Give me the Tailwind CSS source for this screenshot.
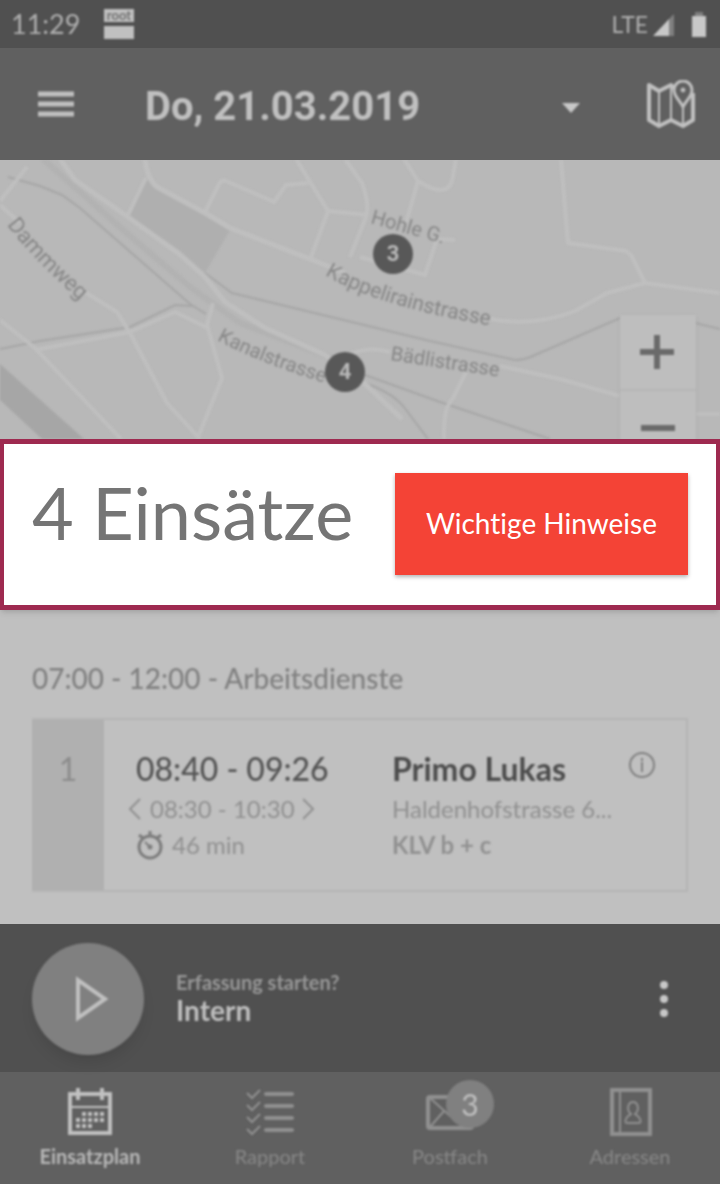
<!DOCTYPE html>
<html lang="de">
<head>
    <meta charset="UTF-8">
    <meta name="viewport" content="width=device-width, initial-scale=1.0">
    <title>Einsatzplan</title>
    <script src="https://cdn.jsdelivr.net/npm/@tailwindcss/browser@4"></script>
</head>
<body class="bg-[#c0c0c0] font-['Lato','Open_Sans',sans-serif]">
    <div class="flex min-h-screen flex-col overflow-hidden">

        <!-- Status Bar -->
        <div class="h-12 bg-[#505050] text-[#b0b0b0]">
            <div class="flex h-12 items-center justify-between pr-2 pl-[11px] blur-[1px]">
                <div class="flex items-center gap-[23px]">
                    <span class="text-[27px] leading-8">11:29</span>
                    <svg class="h-8 w-8" viewBox="0 0 32 32" aria-hidden="true">
                        <path fill="#c0c0c0" d="M1 1h30v13H1zM1 18h30v13H1z"/>
                        <text x="16" y="12" text-anchor="middle" font-family="Lato" font-weight="700" font-size="13" fill="#707070">root</text>
                    </svg>
                </div>
                <div class="flex items-center gap-1">
                    <span class="text-[23px] leading-8">LTE</span>
                    <svg class="h-8 w-6" viewBox="0 0 24 32" aria-hidden="true">
                        <path fill="#808080" d="M17 11l5-5v22h-5z"/>
                        <path fill="#c8c8c8" d="M1 28L17 11v17z"/>
                    </svg>
                    <svg class="ml-2 h-8 w-6" viewBox="0 0 24 32" aria-hidden="true">
                        <path fill="#808080" d="M7 4h8v4h-8z"/>
                        <path fill="#c8c8c8" d="M4 8h14v21H4z"/>
                    </svg>
                </div>
            </div>
        </div>

        <!-- Header -->
        <header class="bg-[#606060]">
            <div class="flex h-28 items-center pr-6 pl-8 text-[#c0c0c0] blur-[1px]">
                <button type="button" aria-label="Menü" class="h-12 w-12">
                    <svg class="h-12 w-12" viewBox="0 0 48 48">
                        <path stroke="#c0c0c0" stroke-width="5" d="M6 14h36M6 24h36M6 34h36"/>
                    </svg>
                </button>
                <button type="button" class="ml-16 flex flex-1 items-center justify-between pt-[6px] pl-px text-left">
                    <span class="font-['Roboto',sans-serif] text-[40px] leading-[48px] font-bold">Do, 21.03.2019</span>
                    <svg class="mr-16 h-5 w-5" viewBox="0 0 20 20" aria-hidden="true">
                        <path fill="#c8c8c8" d="M0 6h18l-9 10z"/>
                    </svg>
                </button>
                <button type="button" aria-label="Karte" class="h-12 w-[50px]">
                    <svg class="h-12 w-[50px]" viewBox="0 0 50 48" fill="none" stroke="#c0c0c0">
                        <path stroke-width="4" stroke-linejoin="round" d="M30 10l-5-5-12 6-10-6v35l10 6 12-6 12 6 10-6V13"/>
                        <path stroke-width="2" d="M13 11v34M25 5v36M37 27v18"/>
                        <path stroke-width="3" fill="#606060" d="M37 27c-3-7-9-10-9-17a9 9 0 0 1 18 0c0 7-6 10-9 17z"/>
                        <circle cx="37" cy="10" r="2" fill="#c0c0c0"/>
                    </svg>
                </button>
            </div>
        </header>

        <!-- Map -->
        <section class="relative h-[279px] overflow-hidden bg-[#b8b8b8]" aria-label="Karte">
            <svg class="h-full w-full blur-[1px]" viewBox="0 160 720 279" preserveAspectRatio="xMidYMid slice">
                <defs>
                    <path id="dammweg" d="M7 225Q35 262 85 305"/>
                    <path id="kappeli" d="M325 275Q380 308 505 328"/>
                    <path id="kanal" d="M217 340Q260 364 345 389"/>
                    <path id="baedli" d="M390 360L515 379"/>
                    <path id="hohle" d="M370 223L455 247"/>
                </defs>
                <!-- areas -->
                <path fill="#afafaf" d="M147 178l10 9 73 43-25 43-25-22-51-35z"/>
                <path fill="#a6a6a6" d="M0 364l84 75H42L0 400z"/>
                <!-- railway -->
                <path fill="none" stroke="#b2b2b2" stroke-width="6" d="M43 159l87 77 60 51 50 36 105 40"/>
                <g fill="none" stroke="#a6a6a6" stroke-width="2">
                    <path d="M8 177l32 9 22 9 18 13 110 96 16 10"/>
                    <path d="M0 349l40-8 90-14 45-22 17 1"/>
                    <path d="M205 273l27 20 128 31 70 17 85 19q10 0 20-5l85-37 55 0 45 11"/>
                    <path d="M362 382q30 10 42 25l24 32M365 375l75 27 110 37"/>
                </g>
                <!-- streets -->
                <g fill="none" stroke="#bfbfbf" stroke-width="4" stroke-linejoin="round">
                    <path d="M0 201l27-34"/>
                    <path d="M0 205l20 18M80 289l37 23 13 21 37 70 33 36"/>
                    <path d="M0 320l35 28 86 91M35 350l95-18 45-20 33 16"/>
                    <path d="M213 303l-6 22 15 53-23 57"/>
                    <path stroke-width="5" d="M60 159l15 21 53 37 50 36 27 24 20 25 40 26 60 27 35 24 42 40"/>
                    <path stroke-width="5" d="M145 159q2 20 12 28l48 26 25 15 80 31 35 14"/>
                    <path d="M146 178l-18 37M205 212l14-28q3-5 7-3l48 21 12-17 22-2"/>
                    <path d="M296 159l32 52-18 49M328 211l40 4M345 159l17 24q8 22 4 34l-16 40"/>
                    <path d="M360 257l65 18 12-36 18 1M404 159l14 22q28 18 34 0l4-22M418 181l-12 42"/>
                    <path d="M490 319q45 8 85-8l32-18 38-10 75 10M561 159l7 84 58 8 5 4 14 28"/>
                    <path d="M350 354q20-8 40-2M500 366l60 13 60 17M466 372l-13 26q-10 10-9 41M695 414h25"/>
                </g>
                <g font-family="Roboto, sans-serif" font-size="21" fill="#868686">
                    <text font-size="22"><textPath href="#dammweg">Dammweg</textPath></text>
                    <text><textPath href="#kappeli">Kappelirainstrasse</textPath></text>
                    <text font-size="20"><textPath href="#kanal">Kanalstrasse</textPath></text>
                    <text font-size="20"><textPath href="#baedli">Bädlistrasse</textPath></text>
                    <text font-size="20"><textPath href="#hohle">Hohle G.</textPath></text>
                </g>
                <g font-family="Roboto, sans-serif" font-size="22" font-weight="700" text-anchor="middle">
                    <circle cx="393" cy="254" r="20" fill="#585858"/>
                    <text x="393" y="261" fill="#b8b8b8">3</text>
                    <circle cx="345" cy="372" r="20" fill="#585858"/>
                    <text x="345" y="379" fill="#b8b8b8">4</text>
                </g>
            </svg>
            <!-- zoom buttons lie over the map -->
            <div class="absolute top-[155px] right-6 w-[76px] divide-y-2 divide-[#b6b6b6] bg-[#bebebe] shadow-sm blur-[1px]">
                <button type="button" aria-label="Vergrössern" class="flex h-[76px] w-full items-center justify-center">
                    <svg class="h-9 w-9" viewBox="0 0 36 36"><path stroke="#6a6a6a" stroke-width="6" d="M17 1v34M0 18h34"/></svg>
                </button>
                <button type="button" aria-label="Verkleinern" class="flex h-[76px] w-full items-center justify-center">
                    <svg class="h-9 w-9" viewBox="0 0 36 36"><path stroke="#6a6a6a" stroke-width="6" d="M1 17h34"/></svg>
                </button>
            </div>
        </section>

        <!-- Highlighted summary -->
        <section class="relative flex items-start justify-between border-x-4 border-y-5 border-[#9e2a50] bg-white px-7 pt-[29px] pb-[30px] shadow-md">
            <h1 class="pt-[3px] text-[72px] leading-[72px] text-[#757575]">4 Einsätze</h1>
            <button type="button" class="bg-[#f44336] px-[31px] pt-[33px] pb-[35px] text-[28px] leading-[34px] text-white shadow-[0_2px_4px_rgba(0,0,0,0.3)] [font-variant-ligatures:none]">Wichtige Hinweise</button>
        </section>

        <!-- Assignment list -->
        <main class="flex-1 bg-[#c0c0c0]">
            <div class="px-8 pt-[52px] pb-8 blur-[1px]">
                <h2 class="text-[28px] leading-8 font-medium text-[#808080]">07:00 - 12:00 - Arbeitsdienste</h2>
                <article class="mt-6 flex border-2 border-l-0 border-[#b4b4b4]">
                    <div class="w-[72px] bg-[#b0b0b0] pt-[29px] text-center text-[32px] leading-10 text-[#8c8c8c]">1</div>
                    <div class="w-[288px] pt-[29px] pb-[29px] pl-6 text-[24px] text-[#909090]">
                        <p class="pl-2 text-[32px] leading-10 font-medium text-[#555555]">08:40 - 09:26</p>
                        <p class="flex items-center gap-2 leading-10">
                            <svg class="h-6 w-[14px]" viewBox="0 0 14 24" fill="none" stroke="#909090" stroke-width="2"><path d="M12 2L2 12l10 10"/></svg>
                            <span>08:30 - 10:30</span>
                            <svg class="h-6 w-[14px]" viewBox="0 0 14 24" fill="none" stroke="#909090" stroke-width="2"><path d="M0 2l10 10L0 22"/></svg>
                        </p>
                        <p class="flex items-center gap-2 pl-2 leading-8">
                            <svg class="h-8 w-7" viewBox="0 0 28 32" fill="none" stroke="#7c7c7c" stroke-width="3">
                                <circle cx="14" cy="18" r="11"/>
                                <path d="M14 2v5M3 6l4 3M25 6l-4 3" />
                                <path stroke-width="2" d="M9 13l5 5"/>
                                <circle cx="14" cy="18" r="1"/>
                            </svg>
                            <span>46 min</span>
                        </p>
                    </div>
                    <div class="min-w-0 flex-1 pt-[29px] text-[24px] text-[#909090]">
                        <p class="text-[32px] leading-10 font-bold text-[#4c4c4c]">Primo Lukas</p>
                        <p class="leading-10">Haldenhofstrasse 6...</p>
                        <p class="leading-8 font-bold">KLV b + c</p>
                    </div>
                    <button type="button" aria-label="Info" class="mt-[31px] mr-[30px] h-7 w-7">
                        <svg class="h-7 w-7" viewBox="0 0 28 28" fill="none" stroke="#808080">
                            <circle cx="14" cy="14" r="12" stroke-width="2"/>
                            <path stroke-width="2" d="M14 11v10M14 7v3"/>
                        </svg>
                    </button>
                </article>
            </div>
        </main>

        <!-- Recording bar -->
        <section class="bg-[#505050]">
            <div class="flex h-[148px] items-center px-8 pt-px blur-[1px]">
                <button type="button" aria-label="Starten" class="flex h-28 w-28 items-center justify-center rounded-full bg-[#808080] shadow-lg">
                    <svg class="h-12 w-12" viewBox="0 0 48 48" fill="none" stroke="#c0c0c0" stroke-width="4"><path d="M14 5v38l27-19z"/></svg>
                </button>
                <div class="ml-8 flex-1 pb-[2px] font-bold">
                    <p class="text-[20px] leading-6 text-[#989898]">Erfassung starten?</p>
                    <p class="text-[28px] leading-8 text-[#c0c0c0]">Intern</p>
                </div>
                <button type="button" aria-label="Mehr" class="h-12 w-12">
                    <svg class="h-12 w-12" viewBox="0 0 48 48" fill="#c8c8c8"><circle cx="24" cy="10" r="4"/><circle cx="24" cy="24" r="4"/><circle cx="24" cy="38" r="4"/></svg>
                </button>
            </div>
        </section>

        <!-- Tab Bar -->
        <nav class="bg-[#606060]">
            <div class="grid h-28 grid-cols-4 text-center text-[20px] leading-6 text-[#888888] blur-[1px]">
                <a href="#einsatzplan" class="flex flex-col items-center gap-2 pt-4 font-bold text-[#b8b8b8]">
                    <svg class="h-12 w-12" viewBox="0 0 48 48" fill="none" stroke="#c0c0c0">
                        <path stroke-width="4" d="M4 6h40v39H4z"/>
                        <path stroke-width="2" d="M4 19h40"/>
                        <path stroke-width="4" d="M12 0v12M36 0v12"/>
                        <path stroke-width="4" stroke-dasharray="4 2" d="M16 26h22M10 32h28M10 38h16"/>
                    </svg>
                    <span>Einsatzplan</span>
                </a>
                <a href="#rapport" class="flex flex-col items-center gap-2 pt-4">
                    <svg class="h-12 w-12" viewBox="0 0 48 48" fill="none" stroke="#909090">
                        <path stroke-width="4" stroke-linecap="round" d="M20 6h26M20 18h26M20 30h26M20 42h26"/>
                        <path stroke-width="2" d="M1 5l5 5 8-8M1 17l5 5 8-8M1 29l5 5 8-8M1 41l5 5 8-8"/>
                    </svg>
                    <span>Rapport</span>
                </a>
                <a href="#postfach" class="flex flex-col items-center gap-2 pt-4">
                    <span class="relative h-12 w-12">
                        <svg class="h-12 w-12" viewBox="0 0 48 48" fill="none" stroke="#909090">
                            <rect x="2" y="9" width="44" height="31" rx="2" stroke-width="4"/>
                            <path stroke-width="2" d="M4 10l20 18 20-18M4 39l14-16M44 39L30 23"/>
                        </svg>
                        <span class="absolute -top-2 left-5 h-12 w-12 rounded-full bg-[#808080] text-[30px] leading-[48px] text-[#c0c0c0]">3</span>
                    </span>
                    <span>Postfach</span>
                </a>
                <a href="#adressen" class="flex flex-col items-center gap-2 pt-4">
                    <svg class="h-12 w-12" viewBox="0 0 48 48" fill="none" stroke="#909090">
                        <path stroke-width="4" d="M6 2h38v44H6z"/>
                        <path stroke-width="2" d="M14 2v44"/>
                        <path stroke-width="2" d="M22 35c-3 0-3-1-2-4s4-4 5-5c-5-4-3-12 2-12s7 8 2 12c1 1 4 2 5 5s1 4-2 4z"/>
                    </svg>
                    <span>Adressen</span>
                </a>
            </div>
        </nav>
    </div>
</body>
</html>
